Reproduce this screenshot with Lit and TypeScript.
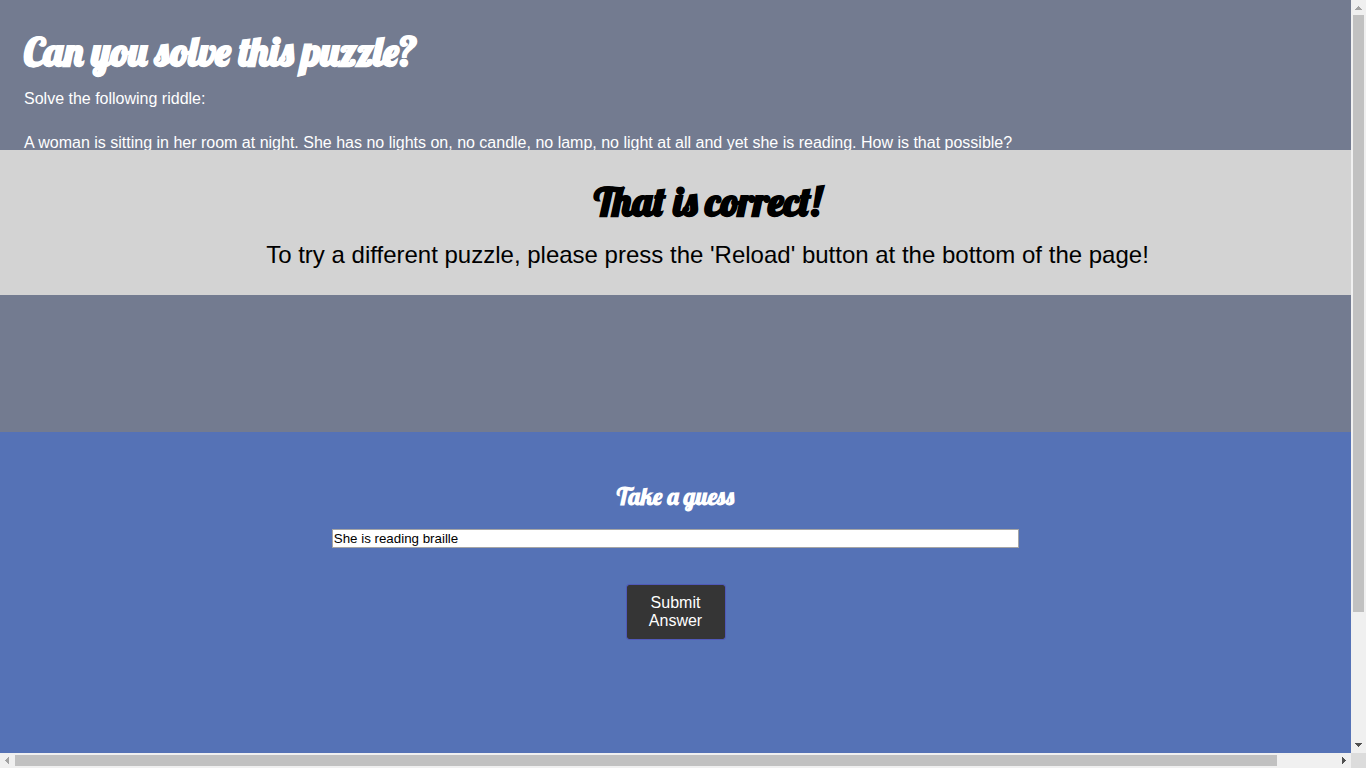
import { LitElement, html, css } from "lit";
import { customElement, state } from "lit/decorators.js";

@customElement("app-root")
export class AppRoot extends LitElement {
  @state() private guess = "She is reading braille";

  static styles = css`
    :host {
      display: grid;
      grid-template: minmax(0, 1fr) 15px / minmax(0, 1fr) 15px;
      height: 100vh;
      font-family: "Liberation Sans", Arial, sans-serif;
      font-size: 16px;
      line-height: 22px;
    }
    .page {
      position: relative;
      display: flex;
      flex-direction: column;
      overflow: hidden;
      color: #fff;
      background: #5572b6;
    }
    h1,
    h2,
    h3 {
      margin: 0;
      font-family: Lobster, "Liberation Serif", serif;
      font-weight: bold;
    }
    h1,
    h2 {
      font-size: 40px;
      line-height: 54px;
      -webkit-text-stroke: 1px currentColor;
    }
    h3 {
      font-size: 24px;
      line-height: 32px;
    }
    p {
      margin: 0;
    }
    .puzzle {
      flex: none;
      min-height: 384px;
      padding: 24px;
      background: #737b90;
    }
    .puzzle p {
      margin: 10px 0 22px;
    }
    .result {
      position: absolute;
      top: 150px;
      left: 0;
      width: 100%;
      padding: 24px 32px;
      color: #000;
      background: #d3d3d3;
      text-align: center;
    }
    .result p {
      margin-top: 10px;
      font-size: 24px;
      line-height: 33px;
    }
    .answer {
      flex: 1;
      display: flex;
      flex-direction: column;
      align-items: center;
      padding-top: 48px;
    }
    .guess {
      box-sizing: border-box;
      width: calc(50% + 12px);
      height: 19px;
      margin: 17px 0 36px;
      padding: 1px;
      border: 1px solid #a5a5a5;
      color: #000;
      background: #fff;
      font-family: inherit;
    }
    .submit {
      width: 100px;
      padding: 9px 16px;
      border: 1px solid #5059b8;
      border-radius: 3px;
      color: #fff;
      background: #353535;
      background-clip: padding-box;
      font: 16px/18px "Liberation Sans", Arial, sans-serif;
    }
    .bar {
      display: flex;
      background: #f0f0f0;
    }
    .vertical {
      flex-direction: column;
    }
    .track {
      flex: 1;
    }
    .thumb {
      background: #c1c1c1;
    }
    .vertical .thumb {
      height: 82.6%;
      margin: 0 2px;
    }
    .horizontal .track {
      padding: 2px 0;
    }
    .horizontal .thumb {
      width: 95.5%;
      height: 11px;
    }
    .bar svg {
      display: block;
      flex: none;
      width: 15px;
      height: 15px;
    }
    .idle {
      fill: #a3a3a3;
    }
    .live {
      fill: #505050;
    }
    .corner {
      background: #dcdcdc;
    }
  `;

  private onInput(e: Event) {
    this.guess = (e.target as HTMLInputElement).value;
  }

  render() {
    return html`
      <main class="page">
        <section class="puzzle">
          <h1>Can you solve this puzzle?</h1>
          <p>Solve the following riddle:</p>
          <p>
            A woman is sitting in her room at night. She has no lights on, no candle, no lamp, no
            light at all and yet she is reading. How is that possible?
          </p>
        </section>
        <form class="answer" @submit=${(e: Event) => e.preventDefault()}>
          <h3><label for="guess">Take a guess</label></h3>
          <input class="guess" id="guess" type="text" .value=${this.guess} @input=${this.onInput} />
          <button class="submit" type="submit">Submit Answer</button>
        </form>
        <section class="result" role="status">
          <h2>That is correct!</h2>
          <p>To try a different puzzle, please press the 'Reload' button at the bottom of the page!</p>
        </section>
      </main>
      <div class="bar vertical" aria-hidden="true">
        <svg class="idle" viewBox="0 0 15 15" shape-rendering="crispEdges"><path d="M7 6h1v1h1v1h1v1h1v1H4V9h1V8h1V7h1z" /></svg>
        <div class="track"><div class="thumb"></div></div>
        <svg class="live" viewBox="0 0 15 15" shape-rendering="crispEdges"><path d="M4 5h7v1h-1v1H9v1H8v1H7V8H6V7H5V6H4z" /></svg>
      </div>
      <div class="bar horizontal" aria-hidden="true">
        <svg class="idle" viewBox="0 0 15 15" shape-rendering="crispEdges"><path d="M5 7h1V6h1V5h1V4h1v7H8v-1H7V9H6V8H5z" /></svg>
        <div class="track"><div class="thumb"></div></div>
        <svg class="live" viewBox="0 0 15 15" shape-rendering="crispEdges"><path d="M6 4h1v1h1v1h1v1h1v1H9v1H8v1H7v1H6z" /></svg>
      </div>
      <div class="corner"></div>
    `;
  }
}
